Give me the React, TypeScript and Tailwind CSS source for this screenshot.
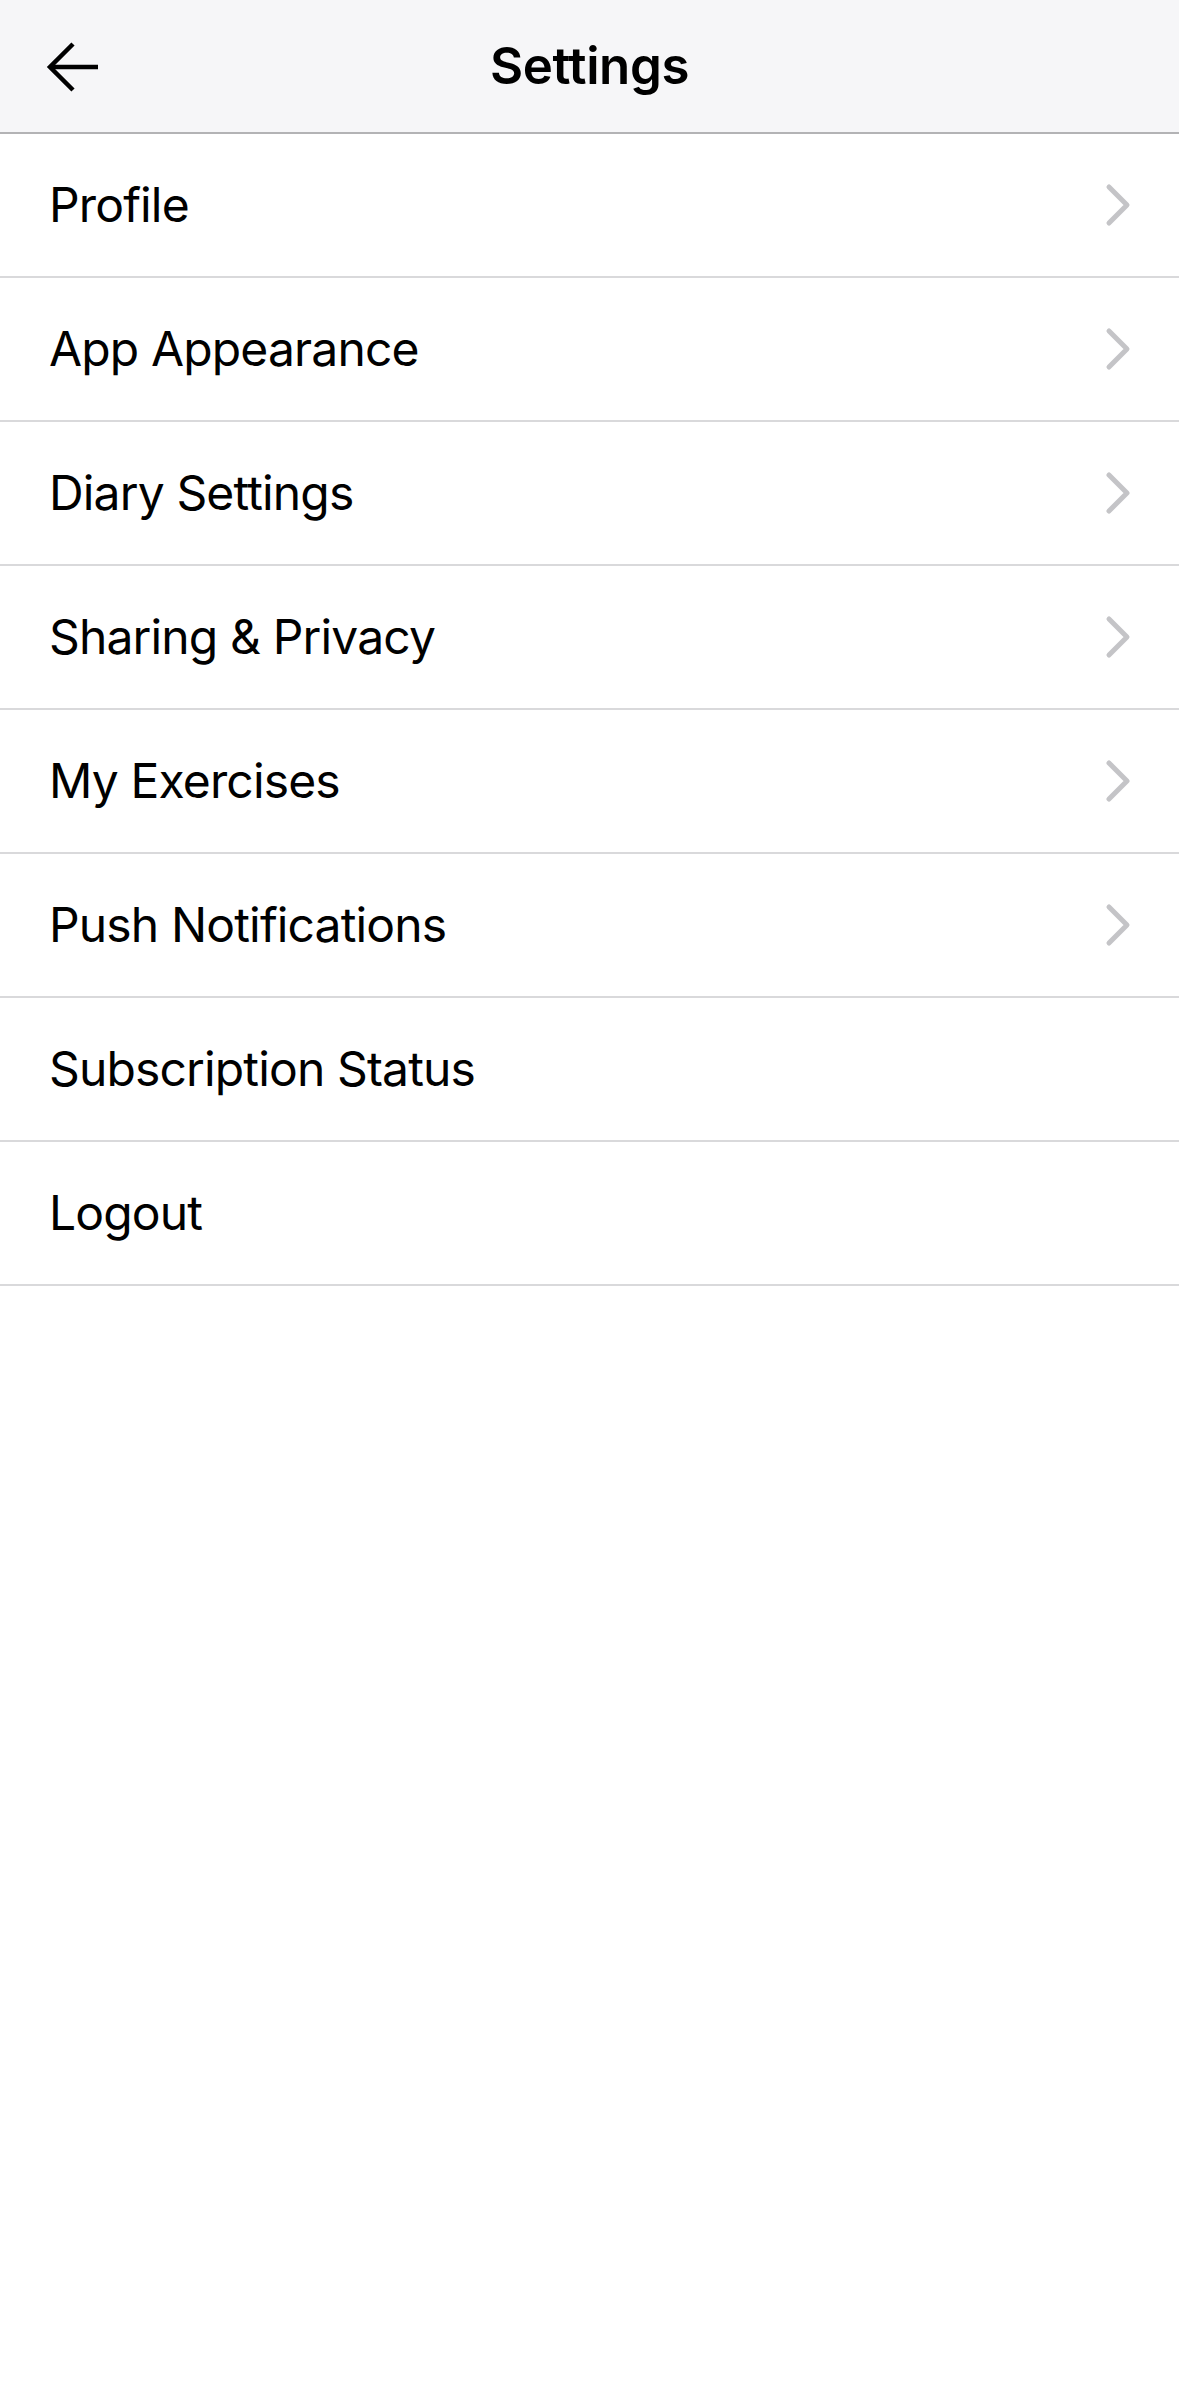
const items = [
  { label: "Profile", arrow: true },
  { label: "App Appearance", arrow: true },
  { label: "Diary Settings", arrow: true },
  { label: "Sharing & Privacy", arrow: true },
  { label: "My Exercises", arrow: true },
  { label: "Push Notifications", arrow: true },
  { label: "Subscription Status", arrow: false },
  { label: "Logout", arrow: false },
]

function BackArrow() {
  return (
    <svg width="56" height="56" viewBox="0 0 56 56" fill="none">
      <path d="M4 28 H52" stroke="#000" strokeWidth="4.5" />
      <path d="M27 5 L4 28 L27 51" stroke="#000" strokeWidth="4.5" strokeLinejoin="miter" />
    </svg>
  )
}

function Chevron() {
  return (
    <svg width="30" height="44" viewBox="0 0 30 44" fill="none">
      <path d="M6 4 L24 22 L6 40" stroke="#c4c4c7" strokeWidth="5" strokeLinecap="round" strokeLinejoin="round" />
    </svg>
  )
}

export default function App() {
  return (
    <div className="min-h-[2396px] w-[1179px] bg-white font-['Inter','Liberation_Sans',sans-serif] text-black">
      <header className="relative flex h-[134px] items-center justify-center border-b-2 border-[#b3b3b5] bg-[#f6f6f8]">
        <button className="absolute left-[46px] top-[39px]">
          <BackArrow />
        </button>
        <h1 className="text-[51px] font-semibold tracking-[-0.4px]">Settings</h1>
      </header>

      <ul>
        {items.map((item) => (
          <li
            key={item.label}
            className="flex h-[144px] items-center justify-between border-b-2 border-[#d9d9db] pl-[49px] pr-[46px]"
          >
            <span className="text-[48px] tracking-[-0.85px]">{item.label}</span>
            {item.arrow && <Chevron />}
          </li>
        ))}
      </ul>
    </div>
  )
}
